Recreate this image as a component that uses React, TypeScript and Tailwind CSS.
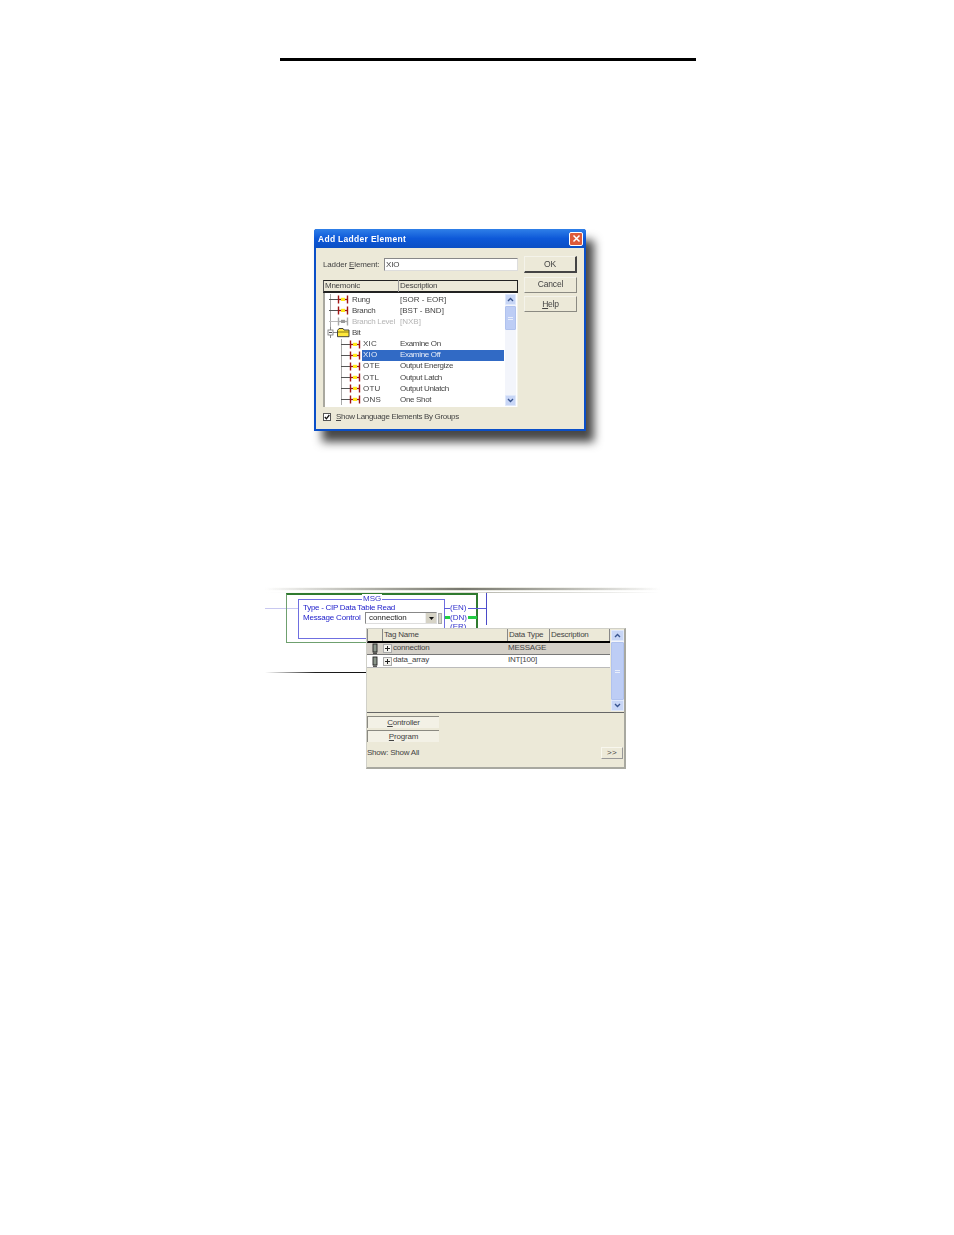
import React from "react";

const font = "font-['Liberation_Sans',Arial,sans-serif]";

function Contact({ x, gray }: { x: number; gray?: boolean }) {
  const c = gray ? "#a8a8a8" : "#a01414";
  return (
    <>
      <path d={`M${x - 9} 5.5H${x}`} stroke={gray ? "#bbb" : "#555"} strokeWidth="1" />
      <path d={`M${x + 0.5} 1.5V9.5M${x + 9.5} 1.5V9.5`} stroke={c} strokeWidth="1.4" fill="none" />
      <path d={`M${x} 5.5H${x + 10}`} stroke={c} strokeWidth="1.3" fill="none" />
      <rect x={x + 3} y="3.8" width="4" height="3.2" fill={gray ? "#999" : "#ffe818"} />
    </>
  );
}

function TreeIcon({ kind }: { kind: "top" | "child" | "gray" | "folder" }) {
  return (
    <svg width="36" height="11" viewBox="0 0 36 11" className="shrink-0">
      {kind === "top" && <><path d="M4.5 0V11" stroke="#aaa" /><Contact x={12} /></>}
      {kind === "gray" && <><path d="M4.5 0V11" stroke="#aaa" /><Contact x={12} gray /></>}
      {kind === "child" && (
        <>
          <path d="M15.5 0V11" stroke="#aaa" />
          <Contact x={24} />
        </>
      )}
      {kind === "folder" && (
        <>
          <path d="M4.5 0V3M4.5 8V11M7 5.5H12" stroke="#888" />
          <rect x="2" y="3" width="5" height="5" fill="#fff" stroke="#777" strokeWidth="0.8" />
          <path d="M3 5.5H6" stroke="#222" strokeWidth="0.8" />
          <path d="M11.5 3.5L13 1.5H17L18 3H23V9.7H11.5Z" fill="#ffe83a" stroke="#333" strokeWidth="0.9" />
          <path d="M11.5 5H23" stroke="#6a5c08" strokeWidth="0.8" />
        </>
      )}
    </svg>
  );
}

const rows: { kind: "top" | "child" | "gray" | "folder"; m: string; d: string; sel?: boolean }[] = [
  { kind: "top", m: "Rung", d: "[SOR - EOR]" },
  { kind: "top", m: "Branch", d: "[BST - BND]" },
  { kind: "gray", m: "Branch Level", d: "[NXB]" },
  { kind: "folder", m: "Bit", d: "" },
  { kind: "child", m: "XIC", d: "Examine On" },
  { kind: "child", m: "XIO", d: "Examine Off", sel: true },
  { kind: "child", m: "OTE", d: "Output Energize" },
  { kind: "child", m: "OTL", d: "Output Latch" },
  { kind: "child", m: "OTU", d: "Output Unlatch" },
  { kind: "child", m: "ONS", d: "One Shot" },
];

function Chevron({ up }: { up?: boolean }) {
  return (
    <svg width="7" height="5" viewBox="0 0 7 5">
      <path d={up ? "M1 4L3.5 1.5L6 4" : "M1 1L3.5 3.5L6 1"} stroke="#39558f" strokeWidth="1.4" fill="none" />
    </svg>
  );
}

function ScrollBar({ thumb, className, fill }: { thumb: string; className: string; fill?: boolean }) {
  return (
    <div className={`flex flex-col bg-[#f3f5fb] ${className}`}>
      <div className="h-[11px] shrink-0 flex items-center justify-center bg-[#c8d6f6] rounded-[1px] border border-[#dfe8fb]"><Chevron up /></div>
      <div className={`${thumb} mt-px flex flex-col gap-px items-center justify-center bg-[#bdcdf5] border border-[#b0c2ee] rounded-[1px]`}>
        <div className="w-[5px] h-px bg-[#e8eefc]" />
        <div className="w-[5px] h-px bg-[#e8eefc]" />
      </div>
      {!fill && <div className="flex-1" />}
      <div className="h-[11px] shrink-0 flex items-center justify-center bg-[#c8d6f6] rounded-[1px] border border-[#dfe8fb]"><Chevron /></div>
    </div>
  );
}

function XpButton({ label, ul, dark }: { label: string; ul?: boolean; dark?: boolean }) {
  return (
    <div className={`w-[53px] flex items-center justify-center bg-[#ece9d8] text-[8.5px] tracking-[-0.2px] text-[#444] border border-[#f4f3ea] ${dark ? "h-[17px] border-r-2 border-b-2 border-r-[#444] border-b-[#444]" : "h-[16px] border-r-[#8b8a82] border-b-[#8b8a82]"}`}>
      {ul ? <span><span className="underline">H</span>elp</span> : label}
    </div>
  );
}

function Dialog() {
  return (
    <div className="ml-[314px] mt-[168px] w-[272px] h-[202px] flex flex-col bg-[#0a50d0] rounded-t-[3px] border-2 border-t-0 border-[#0a4fc8] shadow-[8px_11px_10px_rgba(0,0,0,0.72)] blur-[0.4px]">
      <div className="h-[19px] shrink-0 -mx-[2px] flex items-center justify-between pl-[4px] pr-[3px] bg-gradient-to-b from-[#2f7fe8] via-[#0d58d8] to-[#0b4fc4] rounded-t-[3px]">
        <span className="text-white font-bold text-[8.5px] tracking-[0.3px] pt-[2px]">Add Ladder Element</span>
        <div className="w-[14px] h-[14px] flex items-center justify-center rounded-[2px] border border-white bg-[#dd5a3a]">
          <svg width="9" height="9" viewBox="0 0 9 9"><path d="M1.5 1.5L7.5 7.5M7.5 1.5L1.5 7.5" stroke="#fff" strokeWidth="1.5" /></svg>
        </div>
      </div>
      <div className="flex-1 bg-[#ece9d8] flex flex-col pl-[7px] pr-[6px] text-[#444]">
        <div className="flex gap-[6px] h-[159px] shrink-0">
          <div className="w-[195px] flex flex-col pt-[10px]">
            <div className="flex items-center h-[13px] text-[8px] tracking-[-0.15px]">
              <span className="w-[61px]">Ladder <span className="underline">E</span>lement:</span>
              <div className="w-[134px] h-[13px] bg-white border border-[#888] border-r-[#ddd] border-b-[#ddd] pl-px leading-[11px]">XIO</div>
            </div>
            <div className="mt-[9px] h-[13px] flex items-center text-[8px] border border-[#222] border-l-[#555] border-b-2 bg-[#ece9d8]">
              <span className="w-[75px] pl-[1px] border-r border-[#999] tracking-[-0.25px]">Mnemonic</span>
              <span className="pl-[1px] tracking-[-0.25px]">Description</span>
            </div>
            <div className="h-[114px] flex bg-white border-l-2 border-l-[#a9a89f] pl-[1px] pr-[1px] border-r border-r-[#f4f3ea]">
              <div className="w-[180px] pt-[1px] text-[8px] tracking-[-0.32px]">
                {rows.map((r) => (
                  <div key={r.m} className="flex items-center h-[11.15px]">
                    <TreeIcon kind={r.kind} />
                    {r.kind === "child" ? (
                      <div className={`flex-1 h-full flex items-center ${r.sel ? "bg-[#316ac5] text-[#e6ecf8]" : ""}`}>
                        <span className="w-[37px] pl-px tracking-[0.2px]">{r.m}</span>
                        <span className="pl-px">{r.d}</span>
                      </div>
                    ) : (
                      <div className={`flex-1 h-full flex items-center -ml-[10px] ${r.kind === "gray" ? "text-[#b5b5b5]" : ""}`}>
                        <span className="w-[48px] whitespace-nowrap">{r.m}</span>
                        <span className="tracking-[0px]">{r.d}</span>
                      </div>
                    )}
                  </div>
                ))}
              </div>
              <ScrollBar thumb="h-[24px]" className="w-[11px] ml-[1px] my-[1px]" />
            </div>
          </div>
          <div className="flex flex-col gap-[3.5px] pt-[8px]">
            <XpButton label="OK" dark />
            <XpButton label="Cancel" />
            <XpButton label="Help" ul />
          </div>
        </div>
        <div className="flex items-center gap-[5px] mt-[4px] h-[12px] text-[8px] tracking-[-0.33px]">
          <div className="w-[8px] h-[8px] bg-white border border-[#555] flex items-center justify-center">
            <svg width="6" height="6" viewBox="0 0 6 6"><path d="M0.8 3L2.4 4.8L5.3 1" stroke="#111" strokeWidth="1.3" fill="none" /></svg>
          </div>
          <span><span className="underline">S</span>how Language Elements By Groups</span>
        </div>
      </div>
    </div>
  );
}

function Chip() {
  return (
    <svg width="6" height="11" viewBox="0 0 6 11" className="shrink-0">
      <rect x="1" y="1" width="4" height="8" fill="#8a958a" stroke="#222" strokeWidth="0.9" />
      <path d="M1 10.2H5" stroke="#111" />
    </svg>
  );
}

function Plus() {
  return (
    <svg width="9" height="9" viewBox="0 0 9 9" className="shrink-0">
      <rect x="0.5" y="0.5" width="8" height="8" fill="#f4f3ee" stroke="#aaa" />
      <path d="M2 4.5H7M4.5 2V7" stroke="#222" />
    </svg>
  );
}

function TagRow({ name, type, sel }: { name: string; type: string; sel?: boolean }) {
  return (
    <div className={`flex items-center ${sel ? "h-[12px] bg-[#d4d0c8] border-b border-[#777]" : "h-[13px] bg-white border-b border-[#bbb]"}`}>
      <div className="w-[15px] flex justify-center pl-px"><Chip /></div>
      <div className="w-[125px] flex items-center gap-[1px] pl-[1px]">
        <Plus />
        <span className="-mt-[2px]">{name}</span>
      </div>
      <span className="pl-[1px] -mt-[2px]">{type}</span>
    </div>
  );
}

function TabButton({ first, rest }: { first: string; rest: string }) {
  return (
    <div className="w-[72px] h-[12px] flex items-center justify-center bg-[#f3f1e6] border-t border-l border-[#8b8a82] text-[8px] tracking-[-0.2px]">
      <span><span className="underline">{first}</span>{rest}</span>
    </div>
  );
}

function Dropdown() {
  return (
    <div className="absolute left-[101px] top-[43px] w-[260px] h-[141px] flex flex-col bg-[#ece9d8] border border-[#d0d0c8] border-r-2 border-b-2 border-r-[#a8a8a0] border-b-[#a8a8a0] text-[8px] tracking-[-0.22px] text-[#444]">
      <div className="h-[84px] flex border-b border-[#666] shrink-0">
        <div className="w-[244px] flex flex-col">
          <div className="h-[14px] flex items-center border-b-2 border-black border-l border-l-[#888]">
            <span className="w-[15px] h-full border-r border-[#888]" />
            <span className="w-[125px] h-full border-r border-[#888] pl-[1px] leading-[12px]">Tag Name</span>
            <span className="w-[42px] h-full border-r border-[#888] pl-[1px] leading-[12px]">Data Type</span>
            <span className="flex-1 h-full pl-[1px] border-r border-[#888] leading-[12px]">Description</span>
          </div>
          <TagRow name="connection" type="MESSAGE" sel />
          <TagRow name="data_array" type="INT[100]" />
        </div>
        <ScrollBar thumb="flex-1" fill className="w-[13px] ml-[1px] my-px" />
      </div>
      <div className="flex flex-col gap-[2px] pt-[3px]">
        <TabButton first="C" rest="ontroller" />
        <TabButton first="P" rest="rogram" />
      </div>
      <div className="flex items-center justify-between mt-[5px] pr-[1px]">
        <span>Show: Show All</span>
        <div className="w-[22px] h-[12px] flex items-center justify-center bg-[#ece9d8] border border-[#f8f7ee] border-r-[#999] border-b-[#999] tracking-[0.4px]">&gt;&gt;</div>
      </div>
    </div>
  );
}

function Rung() {
  return (
    <div className="relative ml-[265px] mt-[154px] w-[395px] h-[190px] blur-[0.4px]">
      <div className="absolute left-0 top-[2px] w-full h-[4px] bg-gradient-to-r from-transparent via-[#e4e4da] to-transparent" />
      <div className="absolute left-0 top-[3px] w-full h-[2px] bg-gradient-to-r from-transparent via-[#77776e] to-transparent" />
      <div className="absolute left-[221px] top-[7px] w-[174px] h-px bg-gradient-to-r from-[#bbbbb2] to-transparent" />
      <div className="absolute left-0 top-[7px] w-[221px] h-px bg-gradient-to-r from-transparent to-[#d8d8d0]" />
      <div className="absolute left-0 top-[87px] w-[101px] h-px bg-gradient-to-r from-transparent via-[#222] to-[#111]" />
      <div className="absolute left-0 top-[23px] w-[33px] h-px bg-[#c8c8f0]" />
      <div className="absolute left-[21px] top-[8px] w-[192px] h-[50px] border border-[#6fa06f] border-t-2 border-t-[#2f7a2f] border-r-2 border-r-[#2f7a2f]" />
      <div className="absolute left-[221px] top-[8px] w-px h-[32px] bg-[#4a4ac8]" />
      <div className="absolute left-[33px] top-[14px] w-[147px] h-[40px] border border-[#6f6fe0]" />
      <div className="absolute left-[179px] top-[23px] w-[6px] h-px bg-[#5a5ad8]" />
      <div className="absolute left-[203px] top-[23px] w-[18px] h-px bg-[#5a5ad8]" />
      <div className="absolute left-[180px] top-[31px] w-[5px] h-[3px] bg-[#22cc44]" />
      <div className="absolute left-[203px] top-[31px] w-[9px] h-[3px] bg-[#22cc44]" />
      <span className="absolute left-[97px] top-[9px] px-px bg-white text-[8px] leading-[10px] text-[#3333cc]">MSG</span>
      <span className="absolute left-[38px] top-[18px] text-[8px] leading-[10px] tracking-[-0.28px] text-[#2222cc]">Type - CIP Data Table Read</span>
      <span className="absolute left-[38px] top-[28px] text-[8px] leading-[10px] tracking-[-0.2px] text-[#2222cc]">Message Control</span>
      <span className="absolute left-[185px] top-[18px] text-[8px] leading-[10px] text-[#3333cc]">(EN)</span>
      <span className="absolute left-[185px] top-[28px] text-[8px] leading-[10px] text-[#3333cc]">(DN)</span>
      <span className="absolute left-[185px] top-[37px] text-[8px] leading-[10px] text-[#3333cc]">(ER)</span>
      <div className="absolute left-[100px] top-[27px] w-[72px] h-[12px] flex bg-white border border-[#888] border-r-[#ddd] border-b-[#ddd] text-[8px] leading-[9px] tracking-[-0.1px] text-[#222]">
        <span className="flex-1 pl-[3px]">connection</span>
        <div className="w-[11px] flex items-center justify-center bg-[#d6d3c6] border-l border-[#eee]">
          <svg width="5" height="3" viewBox="0 0 5 3"><path d="M0 0H5L2.5 3Z" fill="#111" /></svg>
        </div>
      </div>
      <div className="absolute left-[173px] top-[28px] w-[4px] h-[11px] bg-[#d6d3c6] border border-[#aaa]" />
      <Dropdown />
    </div>
  );
}

export default function App() {
  return (
    <div className={`w-[954px] h-[1235px] bg-white overflow-hidden flex flex-col ${font}`}>
      <div className="ml-[280px] mt-[58px] w-[416px] h-[3px] shrink-0 bg-black" />
      <Dialog />
      <Rung />
    </div>
  );
}
